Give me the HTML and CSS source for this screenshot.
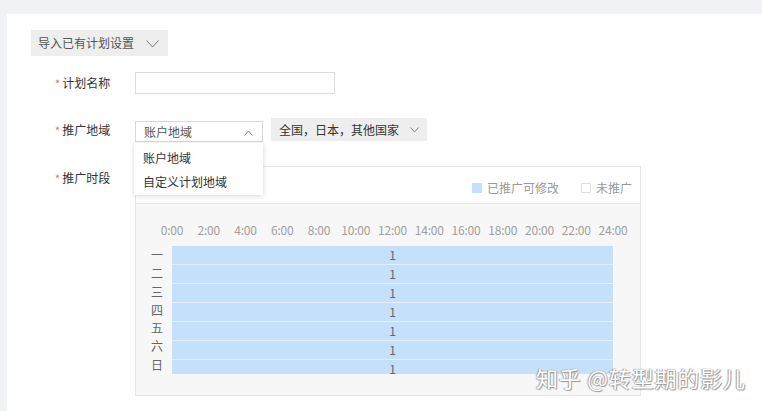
FILE: index.html
```html
<!DOCTYPE html>
<html lang="zh-CN">
<head>
<meta charset="utf-8">
<link rel="stylesheet" href="styles.css">
</head>
<body>
<div class="page">
  <div class="content">
    <div class="import-btn">导入已有计划设置
      <svg class="chev-lg" width="13" height="8" viewBox="0 0 13 8"><polyline points="0.5,0.5 6.5,7 12.5,0.5" fill="none" stroke="#777" stroke-width="1"/></svg>
    </div>

    <div class="form-row row-name">
      <div class="label"><span class="star">*</span>计划名称</div>
      <div class="input"></div>
    </div>

    <div class="form-row row-region">
      <div class="label"><span class="star">*</span>推广地域</div>
      <div class="select-wrap">
        <div class="select">账户地域
          <svg class="chev-up" width="9" height="6" viewBox="0 0 9 6"><polyline points="0.5,5.5 4.5,1 8.5,5.5" fill="none" stroke="#888" stroke-width="1"/></svg>
        </div>
        <div class="menu">
          <div class="menu-item">账户地域</div>
          <div class="menu-item">自定义计划地域</div>
        </div>
      </div>
      <div class="region-btn">全国，日本，其他国家
        <svg class="chev-sm" width="9" height="6" viewBox="0 0 9 6"><polyline points="0.5,0.5 4.5,5 8.5,0.5" fill="none" stroke="#888" stroke-width="1"/></svg>
      </div>
    </div>

    <div class="form-row row-time">
      <div class="label label-time"><span class="star">*</span>推广时段</div>
      <div class="panel">
        <div class="panel-head">
          <div class="legend"><span class="sq sq-on"></span>已推广可修改</div>
          <div class="legend"><span class="sq sq-off"></span>未推广</div>
        </div>
        <div class="panel-body">
          <div class="hours">
            <span>0:00</span><span>2:00</span><span>4:00</span><span>6:00</span><span>8:00</span><span>10:00</span><span>12:00</span><span>14:00</span><span>16:00</span><span>18:00</span><span>20:00</span><span>22:00</span><span>24:00</span>
          </div>
          <div class="grid">
            <div class="days">
              <span>一</span><span>二</span><span>三</span><span>四</span><span>五</span><span>六</span><span>日</span>
            </div>
            <div class="cells">
              <div class="cell">1</div><div class="cell">1</div><div class="cell">1</div><div class="cell">1</div><div class="cell">1</div><div class="cell">1</div><div class="cell">1</div>
            </div>
          </div>
        </div>
      </div>
    </div>

    <div class="watermark">知乎 @转型期的影儿</div>
  </div>
</div>
</body>
</html>
```

FILE: styles.css
```css
* { box-sizing: border-box; }
html, body { margin: 0; padding: 0; }
body {
  width: 762px;
  height: 411px;
  overflow: hidden;
  background: #f0f2f5;
  font-family: "Noto Sans CJK SC", "Microsoft YaHei", sans-serif;
  font-size: 12px;
  color: #333;
}
.page {
  padding: 14px 0 0 7px;
  height: 411px;
}
.content {
  position: relative;
  background: #fff;
  height: 397px;
  padding: 16px 0 0 24px;
}
.import-btn {
  display: inline-flex;
  align-items: center;
  height: 26px;
  width: 137px;
  padding-left: 7px;
  background: #eeeeee;
  color: #555;
  line-height: 26px;
}
.chev-lg { margin-left: 12px; margin-top: 1px; }

.form-row {
  display: flex;
  align-items: center;
  padding-left: 24px;
}
.row-name { margin-top: 16px; }
.row-region { margin-top: 24px; align-items: flex-start; }
.row-time { margin-top: 24px; align-items: flex-start; }

.label {
  width: 80px;
  line-height: 20px;
  color: #333;
}
.star { color: #e26a6a; margin-right: 2px; font-size: 11px; }
.row-region .label { margin-top: 2px; }
.label-time { margin-top: 2px; }

.input {
  width: 200px;
  height: 22px;
  border: 1px solid #dcdcdc;
  background: #fff;
}

.select-wrap { position: relative; margin-top: 3px; }
.select {
  display: flex;
  align-items: center;
  justify-content: space-between;
  width: 128px;
  height: 21px;
  border: 1px solid #d9d9d9;
  padding: 0 9px 0 8px;
  color: #555;
  line-height: 19px;
}
.chev-up { margin-top: 2px; }
.menu {
  position: absolute;
  left: -1px;
  top: 22px;
  width: 129px;
  height: 52px;
  background: #fff;
  box-shadow: 0 1px 5px rgba(0, 0, 0, 0.16);
  padding-top: 3px;
  z-index: 5;
}
.menu-item {
  height: 24px;
  line-height: 24px;
  padding-left: 9px;
  color: #333;
}
.region-btn {
  display: flex;
  align-items: center;
  margin-left: 8px;
  height: 23px;
  width: 156px;
  padding-left: 8px;
  background: #eeeeee;
  color: #333;
  line-height: 23px;
}
.chev-sm { margin-left: 11px; margin-top: 1px; }

.panel {
  width: 506px;
  height: 230px;
  border: 1px solid #e6e6e6;
  background: #f7f7f7;
}
.panel-head {
  height: 37px;
  background: #fff;
  border-bottom: 1px solid #e6e6e6;
  display: flex;
  justify-content: flex-end;
  align-items: center;
  padding-right: 8px;
  padding-top: 6px;
}
.legend {
  display: flex;
  align-items: center;
  color: #999;
  margin-left: 22px;
  line-height: 16px;
}
.sq {
  display: inline-block;
  width: 10px;
  height: 10px;
  margin-right: 5px;
}
.sq-on { background: #c4e0fa; }
.sq-off { background: #fff; border: 1px solid #e0e0e0; }

.panel-body { padding-top: 16px; }
.hours {
  display: flex;
  padding-left: 17.6px;
  white-space: nowrap;
  height: 20px;
  line-height: 20px;
  color: #a0a0a0;
}
.hours span {
  flex: 0 0 36.75px;
  text-align: center;
  letter-spacing: -0.2px;
}
.grid {
  display: flex;
  margin-top: 6px;
  padding-left: 6px;
}
.days {
  width: 30px;
  display: grid;
  grid-template-rows: repeat(7, 1fr);
  height: 128px;
  color: #666;
  text-align: center;
}
.days span { line-height: 18px; }
.cells {
  width: 441px;
  height: 128px;
  display: grid;
  grid-template-rows: repeat(7, 1fr);
  background: #c4e0fa;
}
.cell {
  text-align: center;
  color: #666;
  line-height: 18px;
  font-size: 12px;
}
.cell + .cell { border-top: 1px solid #e3effc; }

.watermark {
  position: absolute;
  left: 529px;
  top: 349px;
  font-size: 22px;
  line-height: 28px;
  color: #ffffff;
  letter-spacing: 0.8px;
  text-shadow: 0 0 1px #8a8a8a, 1px 1px 1px #9a9a9a, -1px 0 1px #aaaaaa;
  white-space: nowrap;
}
```
